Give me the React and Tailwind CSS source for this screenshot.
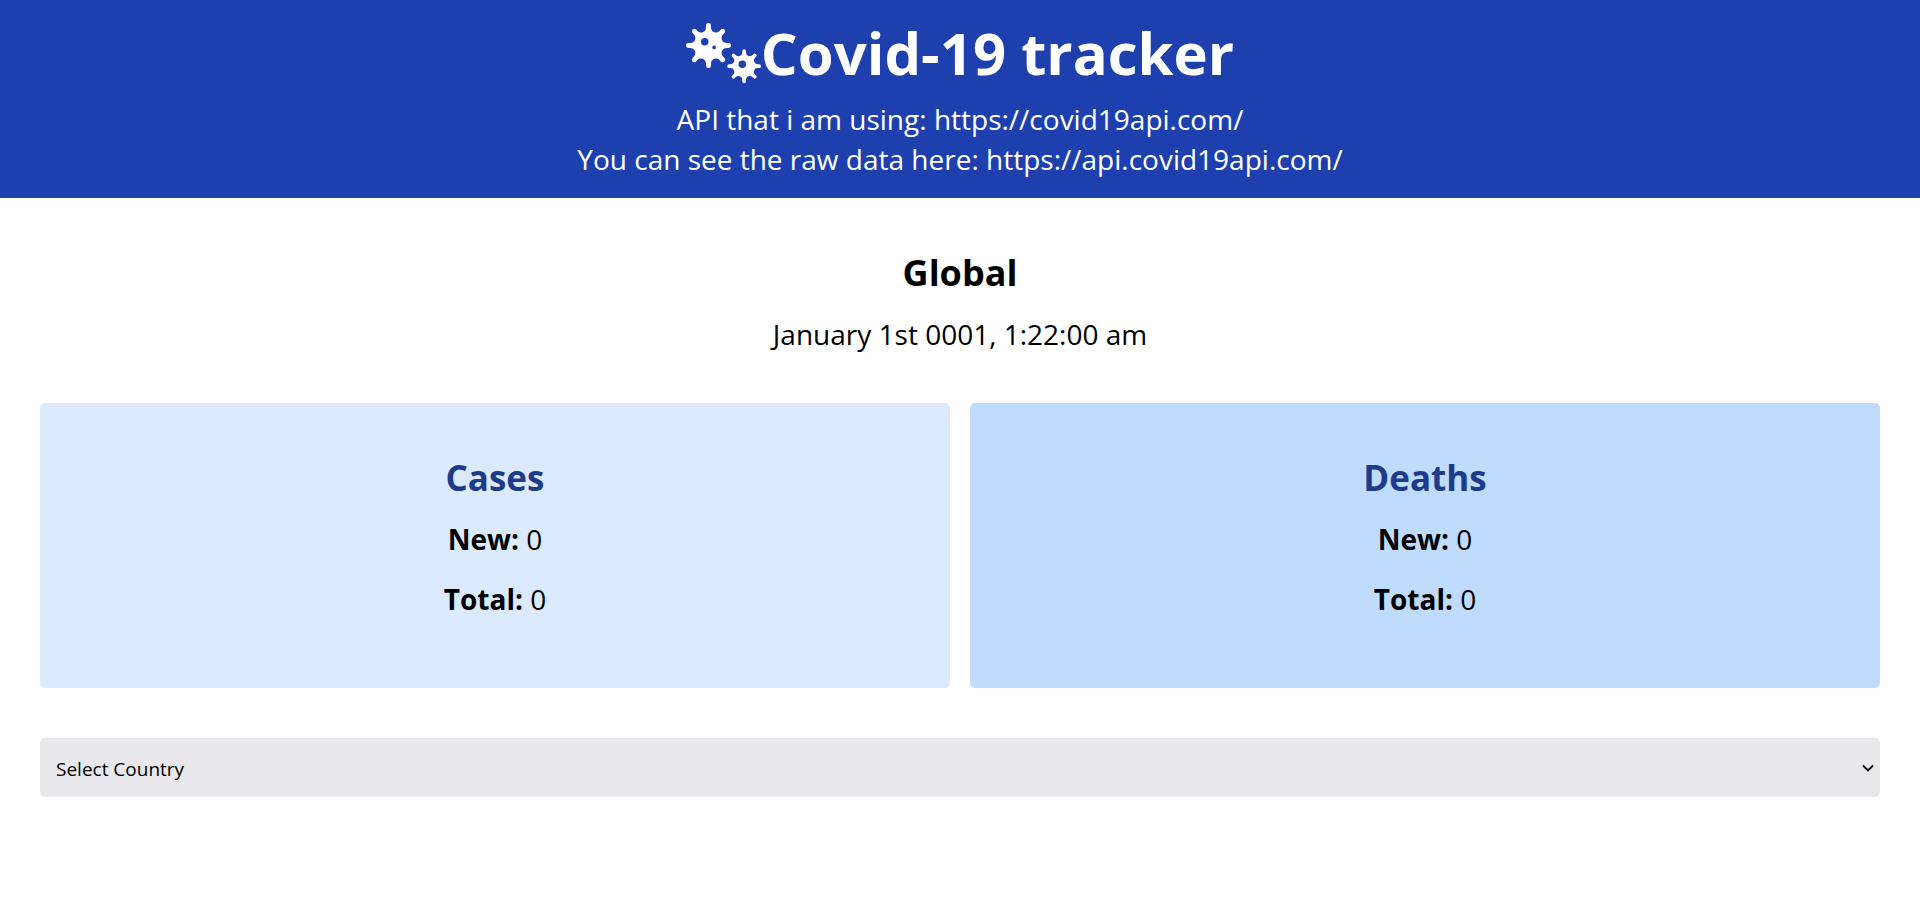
import { FaViruses } from "react-icons/fa";

function StatCard({ title, fresh, total, className }) {
  return (
    <section className={`rounded-[5px] pt-12 pb-[63px] text-center ${className}`}>
      <h2 className="text-[35px] leading-[54px] font-bold text-[#1e3a8a]">{title}</h2>
      <p className="mt-2 text-[28px] leading-[52px]">
        <strong>New:</strong> {fresh}
      </p>
      <p className="mt-2 text-[28px] leading-[52px]">
        <strong>Total:</strong> {total}
      </p>
    </section>
  );
}

export default function App() {
  return (
    <div className="bg-white font-['Open_Sans','Noto_Sans',sans-serif] text-black">
      <header className="bg-[#1e40af] px-5 pt-[22px] pb-[19px] text-center text-white">
        <h1 className="mb-[15px] flex items-center justify-center text-[58px] leading-[62px] font-bold">
          <FaViruses className="h-[60px] w-[75px]" aria-hidden="true" />
          Covid-19 tracker
        </h1>
        <p className="text-[28px] leading-10">
          API that i am using: <a href="https://covid19api.com/">https://covid19api.com/</a>
        </p>
        <p className="text-[28px] leading-10">
          You can see the raw data here:{" "}
          <a href="https://api.covid19api.com/">https://api.covid19api.com/</a>
        </p>
      </header>
      <main className="px-10 py-12">
        <div className="text-center">
          <h2 className="text-4xl leading-[54px] font-bold">Global</h2>
          <p className="mt-2 text-[28px] leading-[52px]">January 1st 0001, 1:22:00 am</p>
        </div>
        <div className="mt-[43px] grid grid-cols-2 gap-5">
          <StatCard title="Cases" fresh={0} total={0} className="bg-[#dbeafe]" />
          <StatCard title="Deaths" fresh={0} total={0} className="bg-[#bfdbfe]" />
        </div>
        <div className="mt-[50px] grid items-center">
          <select
            aria-label="Country"
            defaultValue=""
            className="col-start-1 row-start-1 h-[59px] w-full appearance-none rounded-[5px] bg-[#e9e9ed] px-4 pt-[3px] text-[19px]"
          >
            <option value="">Select Country</option>
          </select>
          <svg
            className="pointer-events-none col-start-1 row-start-1 mr-[6px] h-3 w-3 justify-self-end"
            viewBox="0 0 12 12"
            fill="none"
            stroke="currentColor"
            strokeWidth="1.800"
            aria-hidden="true"
          >
            <path d="M1 3.500 6 8.500l5-5" />
          </svg>
        </div>
      </main>
    </div>
  );
}
